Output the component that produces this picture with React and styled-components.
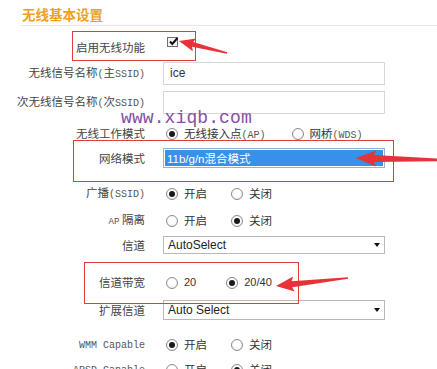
import React from "react";
import styled, { createGlobalStyle } from "styled-components";

const Global = createGlobalStyle`
  html, body { margin: 0; padding: 0; background: #fff; }
  body { font-family: "Noto Sans CJK SC", "Liberation Sans", sans-serif; }
`;

const Page = styled.div`
  position: relative;
  width: 437px;
  height: 369px;
  overflow: hidden;
  background: #fff;
`;

const Title = styled.div`
  box-sizing: border-box;
  height: 26px;
  margin-left: 20px;
  padding: 3px 0 0 2px;
  display: flex;
  align-items: center;
  border-bottom: 1px solid #e8e8e8;
  color: #f0a020;
  font-weight: bold;
  font-size: 13.5px;
  font-family: "Noto Sans CJK SC", sans-serif;
`;

const Form = styled.div`
  display: flex;
  flex-direction: column;
`;

const Row = styled.div`
  display: grid;
  grid-template-columns: 145px 222px;
  column-gap: 18px;
  align-items: center;
  height: 24px;
  margin-top: ${(p) => p.$mt}px;
`;

const Label = styled.div`
  text-align: right;
  font-size: 11.5px;
  line-height: 14px;
  color: #444;
  white-space: nowrap;
  font-family: "Noto Sans CJK SC", sans-serif;
`;

const M = styled.span`
  font-family: "Liberation Mono", monospace;
  font-size: ${(p) => p.$size || 10}px;
  color: #555;
`;

const Control = styled.div`
  display: flex;
  align-items: center;
  height: 100%;
`;

const CheckBox = styled.span`
  box-sizing: border-box;
  align-self: flex-start;
  margin: 2px 0 0 4px;
  width: 11px;
  height: 10px;
  border: 1px solid #6f6f6f;
  background: #f4f4f4;
  position: relative;
  svg { position: absolute; left: 0px; top: -2px; }
`;

const TextInput = styled.div`
  box-sizing: border-box;
  width: 222px;
  height: 23px;
  border: 1px solid #d6d6d6;
  padding-left: 6px;
  display: flex;
  align-items: center;
  font-family: "Liberation Sans", sans-serif;
  font-size: 12px;
  color: #333;
`;

const Select = styled.div`
  box-sizing: border-box;
  width: 222px;
  height: ${(p) => p.$h}px;
  border: 1px solid ${(p) => (p.$active ? "#8fb3e0" : "#b9b9b9")};
  padding: ${(p) => (p.$active ? "1px" : "0 4px 0 4px")};
  display: flex;
  align-items: center;
  justify-content: space-between;
  font-family: "Liberation Sans", "Noto Sans CJK SC", sans-serif;
  font-size: 12px;
  color: #222;
  background: #fff;
`;

const SelectFill = styled.div`
  flex: 1;
  height: 100%;
  background: #3790ea;
  color: #fff;
  display: flex;
  align-items: center;
  padding-left: 2px;
  font-size: 11.5px;
`;

const Caret = styled.span`
  width: 0;
  height: 0;
  border-left: 3.5px solid transparent;
  border-right: 3.5px solid transparent;
  border-top: 4px solid #111;
`;

const RadioGroup = styled.div`
  display: flex;
  align-items: center;
  gap: ${(p) => p.$gap}px;
  margin-left: 3px;
`;

const Option = styled.label`
  display: flex;
  align-items: center;
  gap: 6px;
  font-size: 11.5px;
  color: #333;
  white-space: nowrap;
  font-family: "Noto Sans CJK SC", sans-serif;
`;

const Num = styled.span`
  font-family: "Liberation Sans", sans-serif;
  font-size: 11px;
  color: #333;
`;

const Radio = styled.span`
  box-sizing: border-box;
  width: 12px;
  height: 12px;
  border-radius: 50%;
  border: 1px solid #8a8a8a;
  background: radial-gradient(circle at 50% 40%, #ffffff 40%, #e6e6e6 100%);
  display: flex;
  align-items: center;
  justify-content: center;
  margin-top: 2px;
  &::after {
    content: "";
    width: 6px;
    height: 6px;
    border-radius: 50%;
    background: ${(p) => (p.$on ? "#1a1a1a" : "transparent")};
  }
`;

const Watermark = styled.div`
  position: absolute;
  left: 121px;
  top: 109px;
  font-family: "Liberation Mono", monospace;
  font-size: 18px;
  line-height: 18px;
  color: #8a4da6;
  letter-spacing: 0.1px;
`;

const Highlight = styled.div`
  position: absolute;
  box-sizing: border-box;
  left: ${(p) => p.$x}px;
  top: ${(p) => p.$y}px;
  width: ${(p) => p.$w}px;
  height: ${(p) => p.$h}px;
  border: 1px solid #de3c43;
  pointer-events: none;
`;

const Overlay = styled.svg`
  position: absolute;
  left: 0;
  top: 0;
  pointer-events: none;
`;

function arrowPoints(tip, tail, headLen, headW, neckW, tailW) {
  const dx = tail[0] - tip[0];
  const dy = tail[1] - tip[1];
  const L = Math.hypot(dx, dy);
  const u = [dx / L, dy / L];
  const p = [-u[1], u[0]];
  const at = (d, w) => [tip[0] + u[0] * d + p[0] * w, tip[1] + u[1] * d + p[1] * w];
  const pts = [
    tip,
    at(headLen, headW),
    at(headLen - 2, neckW),
    at(L, tailW),
    at(L, -tailW),
    at(headLen - 2, -neckW),
    at(headLen, -headW),
  ];
  return pts.map((q) => q[0].toFixed(1) + "," + q[1].toFixed(1)).join(" ");
}

const Opt = ({ on, children }) => (
  <Option>
    <Radio $on={on} />
    {children}
  </Option>
);

const OnOff = ({ on }) => (
  <RadioGroup $gap={24}>
    <Opt on={on}>开启</Opt>
    <Opt on={!on}>关闭</Opt>
  </RadioGroup>
);

export default function App() {
  return (
    <Page>
      <Global />
      <Title>无线基本设置</Title>
      <Form>
        <Row $mt={9}>
          <Label>启用无线功能</Label>
          <Control>
            <CheckBox>
              <svg width="11" height="11" viewBox="0 0 11 11">
                <path d="M2 5.5 L4.3 8 L9.5 2" fill="none" stroke="#111" strokeWidth="2" />
              </svg>
            </CheckBox>
          </Control>
        </Row>
        <Row $mt={2}>
          <Label>
            无线信号名称<M>(</M>主<M>SSID)</M>
          </Label>
          <Control>
            <TextInput>ice</TextInput>
          </Control>
        </Row>
        <Row $mt={5}>
          <Label>
            次无线信号名称<M>(</M>次<M>SSID)</M>
          </Label>
          <Control>
            <TextInput />
          </Control>
        </Row>
        <Row $mt={7}>
          <Label>无线工作模式</Label>
          <Control>
            <RadioGroup $gap={26}>
              <Opt on>
                <span>
                  无线接入点<M>(AP)</M>
                </span>
              </Opt>
              <Opt>
                <span>
                  网桥<M>(WDS)</M>
                </span>
              </Opt>
            </RadioGroup>
          </Control>
        </Row>
        <Row $mt={1}>
          <Label>网络模式</Label>
          <Control>
            <Select $h={20} $active>
              <SelectFill>11b/g/n混合模式</SelectFill>
            </Select>
          </Control>
        </Row>
        <Row $mt={11}>
          <Label>
            广播<M>(SSID)</M>
          </Label>
          <Control>
            <OnOff on />
          </Control>
        </Row>
        <Row $mt={3}>
          <Label>
            <M $size={9}>AP</M> 隔离
          </Label>
          <Control>
            <OnOff on={false} />
          </Control>
        </Row>
        <Row $mt={1}>
          <Label>信道</Label>
          <Control>
            <Select $h={18}>
              <span>AutoSelect</span>
              <Caret />
            </Select>
          </Control>
        </Row>
        <Row $mt={13}>
          <Label>信道带宽</Label>
          <Control>
            <RadioGroup $gap={30}>
              <Opt>
                <Num>20</Num>
              </Opt>
              <Opt on>
                <Num>20/40</Num>
              </Opt>
            </RadioGroup>
          </Control>
        </Row>
        <Row $mt={4}>
          <Label>扩展信道</Label>
          <Control>
            <Select $h={20}>
              <span>Auto Select</span>
              <Caret />
            </Select>
          </Control>
        </Row>
        <Row $mt={10}>
          <Label>
            <M>WMM Capable</M>
          </Label>
          <Control>
            <OnOff on />
          </Control>
        </Row>
        <Row $mt={1}>
          <Label>
            <M>APSD Capable</M>
          </Label>
          <Control>
            <OnOff on={false} />
          </Control>
        </Row>
      </Form>

      <Watermark>www.xiqb.com</Watermark>

      <Highlight $x={72} $y={31} $w={124} $h={30} />
      <Highlight $x={73} $y={140} $w={321} $h={42} />
      <Highlight $x={84} $y={262} $w={215} $h={42} />

      <Overlay width="437" height="369" viewBox="0 0 437 369">
        <polygon points={arrowPoints([179, 41], [227, 53], 16, 6.5, 2.5, 0.7)} fill="#e8323a" />
        <polygon points={arrowPoints([356, 158], [440, 160], 20, 8, 3.5, 1.2)} fill="#e8323a" />
        <polygon points={arrowPoints([276, 286], [348, 278], 18, 7.5, 3, 0.8)} fill="#e8323a" />
      </Overlay>
    </Page>
  );
}
